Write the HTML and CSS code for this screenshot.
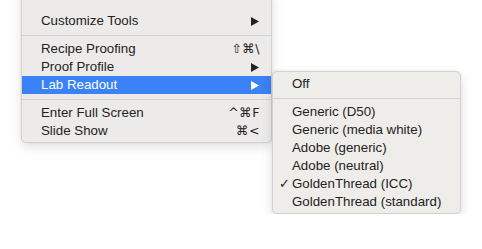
FILE: index.html
```html
<!DOCTYPE html>
<html lang="en">
  <head>
    <meta charset="UTF-8" />
    <title>View menu</title>
    <link rel="stylesheet" href="styles.css">
  </head>
  <body>
    <div class="menus">
      <!-- main menu -->
      <ul class="menu menu-main">
        <li class="item"><span>Customize Tools</span><svg class="arrow" viewBox="0 0 8 9"><polygon points="0,0 8,4.5 0,9" /></svg></li>
        <li class="sep"></li>
        <li class="item"><span>Recipe Proofing</span><span class="key">⇧⌘\</span></li>
        <li class="item"><span>Proof Profile</span><svg class="arrow" viewBox="0 0 8 9"><polygon points="0,0 8,4.5 0,9" /></svg></li>
        <li class="item active"><span>Lab Readout</span><svg class="arrow" viewBox="0 0 8 9"><polygon points="0,0 8,4.5 0,9" /></svg></li>
        <li class="sep"></li>
        <li class="item"><span>Enter Full Screen</span><span class="key">^⌘F</span></li>
        <li class="item"><span>Slide Show</span><span class="key">⌘&lt;</span></li>
      </ul>

      <!-- submenu -->
      <ul class="menu menu-sub">
        <li class="item"><span>Off</span></li>
        <li class="sep"></li>
        <li class="item"><span>Generic (D50)</span></li>
        <li class="item"><span>Generic (media white)</span></li>
        <li class="item"><span>Adobe (generic)</span></li>
        <li class="item"><span>Adobe (neutral)</span></li>
        <li class="item checked"><span class="check">✓</span><span>GoldenThread (ICC)</span></li>
        <li class="item"><span>GoldenThread (standard)</span></li>
      </ul>
    </div>
  </body>
</html>
```

FILE: styles.css
```css
/* resets */
* {
  padding: 0;
  margin: 0;
  box-sizing: border-box;
}
body {
  font-family: "Liberation Sans", Arial, sans-serif;
  font-size: 13.3px;
  background: #fff;
  color: #222;
  overflow: hidden;
}

.menus {
  display: flex;
  align-items: flex-start;
  padding-left: 21px;
}

.menu {
  list-style: none;
  background-color: #ecebe9;
  border: 1px solid #d3d1cf;
  border-radius: 5px;
  box-shadow: rgba(0, 0, 0, 0.12) 0px 4px 12px, rgba(0, 0, 0, 0.08) 0px 0px 2px;
}

.menu-main {
  width: 251px;
  margin-top: -10px;
  padding: 22px 0 2px 0;
  border-top: none;
  border-radius: 0 0 5px 5px;
}

.menu-sub {
  width: 189px;
  margin-top: 71px;
  padding: 3px 0 2px 0;
  background-color: #efedea;
  position: relative;
  z-index: 2;
}

.item {
  display: flex;
  align-items: center;
  justify-content: space-between;
  height: 18px;
  padding: 0 11px 0 19px;
  line-height: 18px;
}

.menu-sub .item {
  justify-content: flex-start;
  padding-left: 19px;
}

.item.active {
  background-color: #3a82f6;
  color: #fff;
}

.arrow {
  width: 8px;
  height: 9px;
  fill: #222;
  margin-right: 1px;
}
.active .arrow {
  fill: #fff;
}

.key {
  font-family: "DejaVu Sans", sans-serif;
  font-size: 12.5px;
  letter-spacing: 0.5px;
}

.check {
  font-family: "DejaVu Sans", sans-serif;
  width: 0;
  margin-left: -13px;
  margin-right: 13px;
  font-size: 13px;
}

.sep {
  height: 10px;
  display: flex;
  align-items: center;
}
.sep::after {
  content: "";
  display: block;
  width: 100%;
  height: 1px;
  background-color: #d5d3d1;
}
```
